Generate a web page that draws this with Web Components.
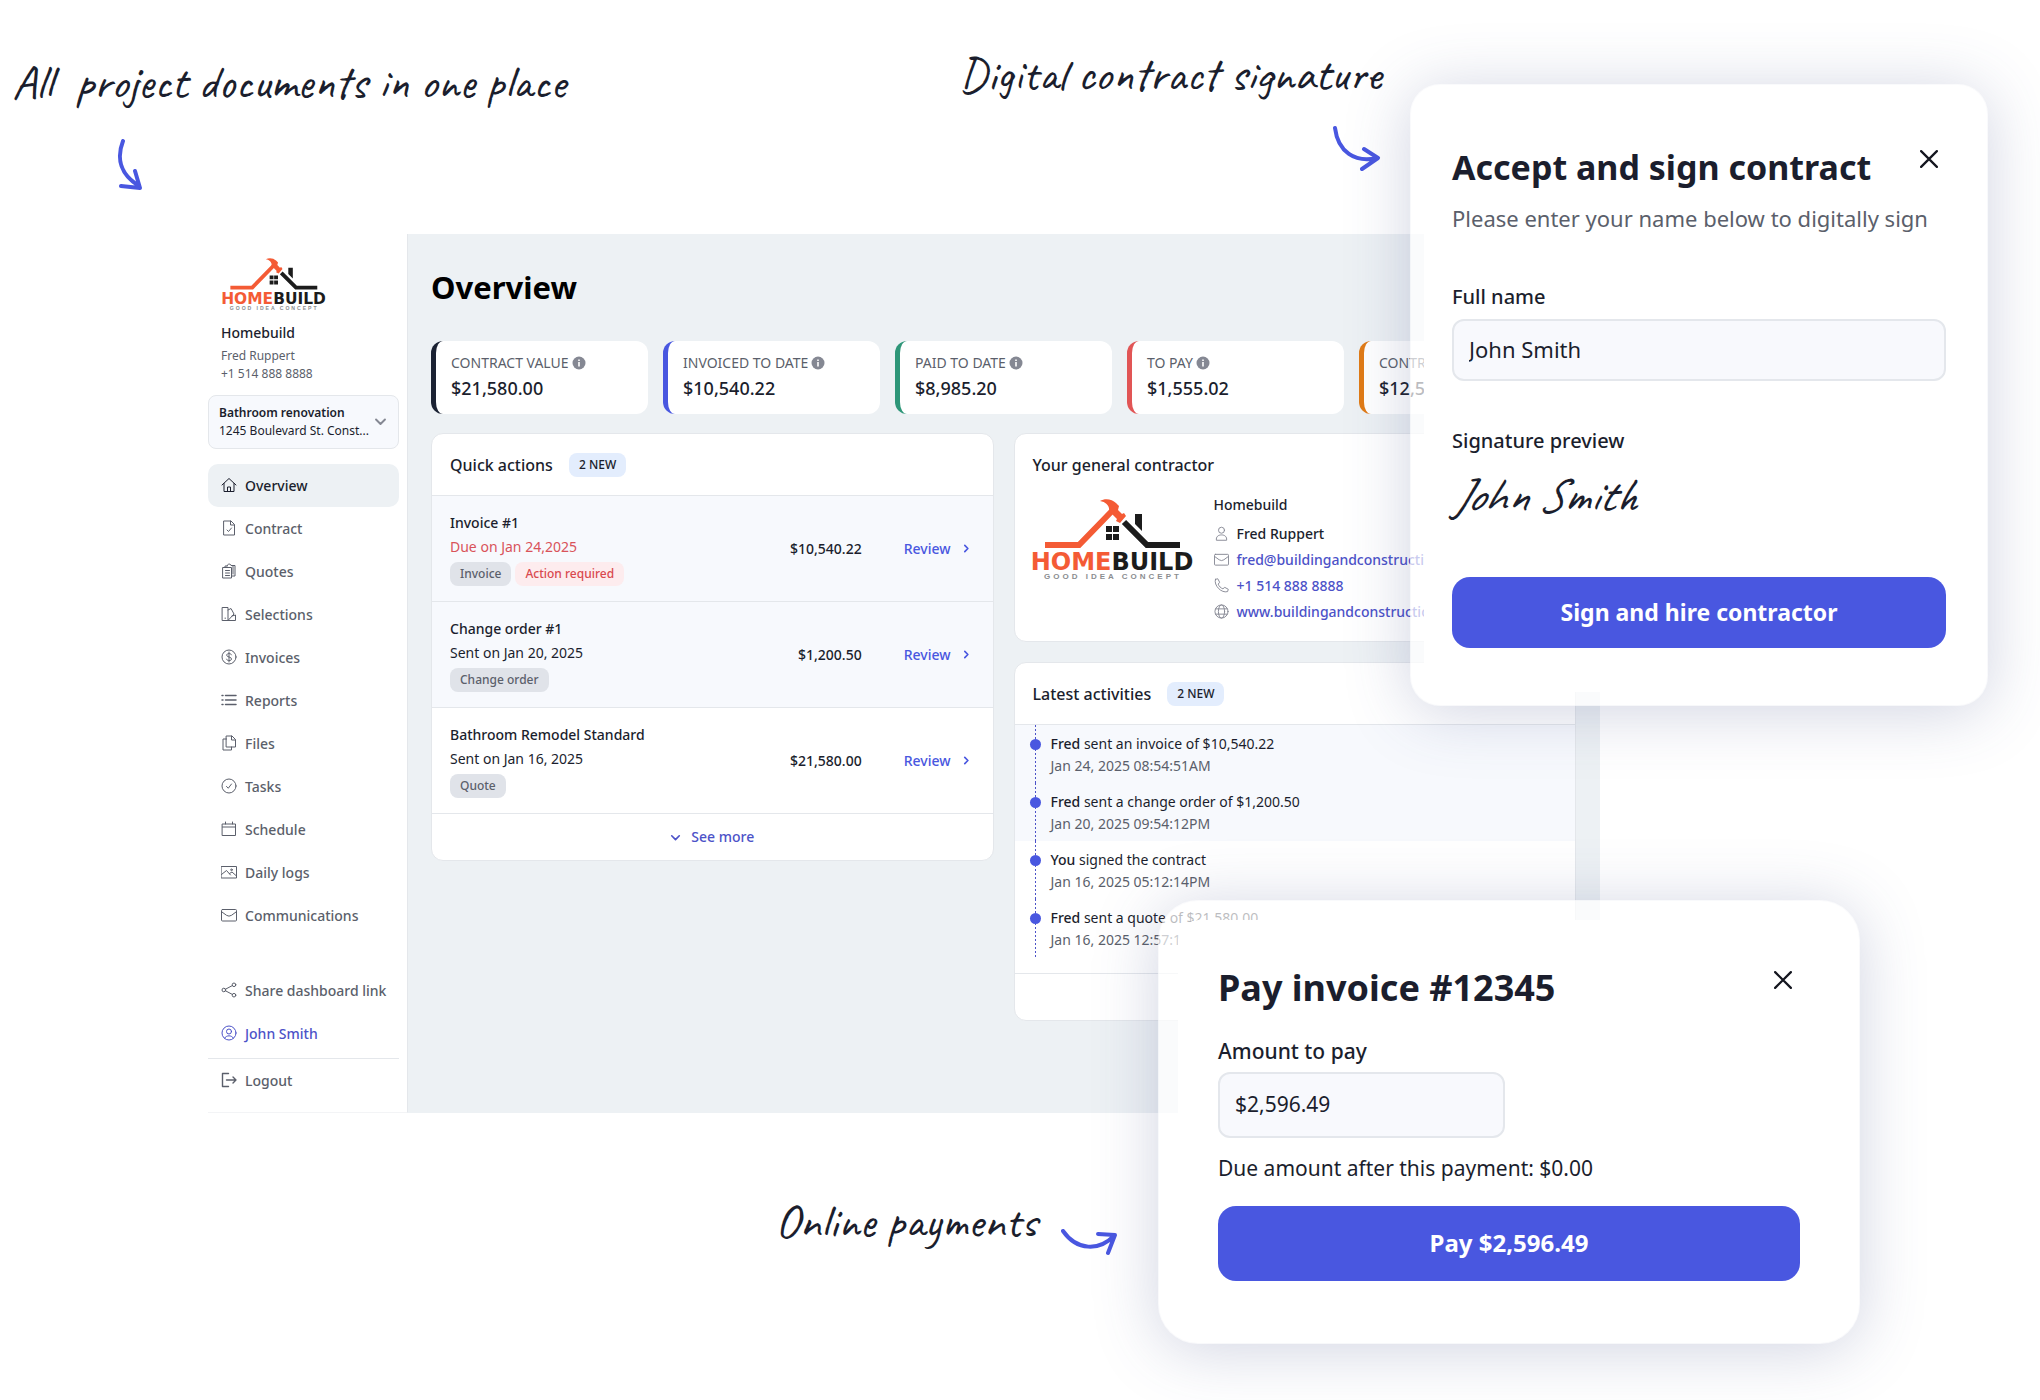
<!DOCTYPE html>
<html lang="en">
<head>
<meta charset="utf-8">
<title>Homebuild client dashboard</title>
<style>
  :root {
    --color-text: #1b1e2d;
    --color-text-secondary: #5b5f6b;
    --color-primary: #4957e0;
    --color-bg: #edf1f4;
    --color-tint: #f7f9fd;
    --color-border: #e4e7eb;
    --font-family: 'Noto Sans', 'Open Sans', sans-serif;
    --font-hand: Caveat, cursive;
  }

  body {
    margin: 0;
    background: #fff;
    color: var(--color-text);
    font-family: var(--font-family);
  }
</style>
</head>
<body>
<showcase-page></showcase-page>

<script>
/** Small base class: puts the markup returned by render() into an open shadow root. */
class BaseElement extends HTMLElement {
  constructor() {
    super();
    this.attachShadow({ mode: 'open' });
  }

  connectedCallback() {
    this.shadowRoot.innerHTML = this.render();
  }

  attr(name, fallback = '') {
    return this.getAttribute(name) ?? fallback;
  }
}

const ICONS = {
  home: '<path d="M1 8 8 1.5 15 8M3 6.500V14.500H13V6.500M6.500 14.500V10H9.500V14.500"/>',
  contract: '<path d="M3 1H10L13.500 4.500V15H3ZM9.500 1V5H13.500M6 10 7.500 11.500 10.500 8"/>',
  quotes: '<path d="M2 4.500H10.500V15H2ZM4 4.500V3H6M6 3C6 .5 10 .5 10 2.500H14V13H10.500M4.500 7.500H8.500M4.500 10H8.500M4.500 12.500H8.500M12 2.500V11"/>',
  selections: '<path d="M1.500 1.500H7V14.500H1.500ZM7 4 10 2.500 13 8 7 14.500M11 10 14.500 9V14.500H7M4.200 12V12.500"/>',
  invoices: '<circle cx="8" cy="8" r="7"/><path d="M10.500 5.800C10 4 5.700 4 5.700 6.200 5.700 8.500 10.500 7.500 10.500 10 10.500 12.200 6 12.200 5.500 10.200M8 3V13"/>',
  reports: '<path stroke-width="1.500" d="M4.500 3.500H15M4.500 8H15M4.500 12.500H15M1 3.500H2M1 8H2M1 12.500H2"/>',
  files: '<path d="M5.500 1H11L14.500 4.500V12H5.500ZM10.500 1V5H14.500M5.500 4H2V15H10.500V12"/>',
  tasks: '<circle cx="8" cy="8" r="7"/><path d="M5.500 8.500 7.300 10.200 10.500 6"/>',
  schedule: '<path d="M1.500 3H14.500V14.500H1.500ZM1.500 6H14.500M4.500 1V3M11.500 1V3"/>',
  logs: '<path d="M.5 2.500H15.500V14H.5ZM.5 10.500 5.500 6.500 9.500 11M8.500 9.500 11 8 15.500 12"/><circle cx="10.500" cy="5.800" r=".8"/>',
  mail: '<rect x=".5" y="2.500" width="15" height="11.500" rx="1"/><path d="M1 5 5.500 8.300Q8 10 10.500 8.300L15 5"/>',
  share: '<circle cx="2.800" cy="8" r="1.800"/><circle cx="13" cy="2.800" r="1.800"/><circle cx="13" cy="13.200" r="1.800"/><path d="M4.500 7.200 11.300 3.600M4.500 8.800 11.300 12.400"/>',
  account: '<circle cx="8" cy="8" r="7"/><circle cx="8" cy="6.500" r="2.500"/><path d="M3.800 13C5 10 11 10 12.200 13"/>',
  logout: '<path stroke-width="1.400" d="M7.500 1.500H1.500V14.500H7.500M5.500 8H15M12 5 15 8 12 11"/>',
  person: '<circle cx="8" cy="4.500" r="3.200"/><path d="M2.500 14.800C2 11.500 4.500 9.500 8 9.500S14 11.500 13.500 14.800Z"/>',
  phone: '<path d="M1.500 1.500 4 .8 6 4.500 4.500 6.500C5 8.500 7.500 11 9.500 11.500L11.500 10 15.200 12 14.500 14.500C8 16.500-.5 8 1.500 1.500Z"/>',
  globe: '<circle cx="8" cy="8" r="7"/><ellipse cx="8" cy="8" rx="3.300" ry="7"/><path d="M1.800 5.200H14.200M1.800 10.800H14.200"/>',
  right: '<path stroke-width="2.400" d="M5.500 3.500 10 8 5.500 12.500"/>',
  down: '<path stroke-width="2.400" d="M2.500 5.500 8 11 13.500 5.500"/>',
  close: '<path stroke-width="2" d="M1 1 15 15M15 1 1 15"/>',
};

/** <ui-icon name="home"> - 16 unit line icon, sized with --icon-size */
class UiIcon extends BaseElement {
  render() {
    return `
      <style>
        :host { display: inline-flex; flex: none; width: var(--icon-size, 16px); height: var(--icon-size, 16px); }
        svg { width: 100%; height: 100%; fill: none; stroke: currentColor; stroke-width: 1; stroke-linejoin: round; stroke-linecap: round; }
      </style>
      <svg viewBox="0 0 16 16" aria-hidden="true">${ICONS[this.attr('name')] || ''}</svg>
    `;
  }
}

/** <brand-logo> - roof and hammer mark with the company name */
class BrandLogo extends BaseElement {
  render() {
    return `
      <style>
        :host { display: block; flex: none; }
        svg { display: block; width: 100%; overflow: visible; }
        .name { font: 700 24px 'DejaVu Sans', sans-serif; }
        .tagline { font: 700 8px 'Liberation Sans', sans-serif; letter-spacing: 3px; fill: #8b8d90; }
      </style>
      <svg viewBox="0 0 160 80" role="img" aria-label="Homebuild">
        <g fill="none" stroke-width="6">
          <path stroke="#f45b35" d="M13 46H47L80 12"/>
          <path stroke="#1c1c1c" d="M92 23 115 46H148"/>
        </g>
        <path fill="#f45b35" d="M68 2C73-1 80 0 84 4L87 7 86 11 90 15 92 14 94 17 88 24 84 22 85 20 80 15 77 12C78 7 74 3 68 2Z"/>
        <path fill="#1c1c1c" d="M103 15H110V32L103 25ZM74 27H80V33H74ZM81 27H87V33H81ZM74 35H80V41H74ZM81 35H87V41H81Z"/>
        <text class="name" x="80" y="71" text-anchor="middle"><tspan fill="#f45b35">HOME</tspan><tspan fill="#1c1c1c">BUILD</tspan></text>
        <text class="tagline" x="81" y="80" text-anchor="middle">GOOD IDEA CONCEPT</text>
      </svg>
    `;
  }
}

/** <hand-note arrow="down|right|up"> - handwritten caption with a blue arrow */
class HandNote extends BaseElement {
  render() {
    const arrows = {
      down: '<svg width="28" height="52" viewBox="0 0 28 52"><path d="M7 2C0 20 5 36 23 47M5 47 24 49 19 32"/></svg>',
      right: '<svg width="48" height="46" viewBox="0 0 48 46"><path d="M2 2C5 26 22 37 44 32M31 23 45 32 29 43"/></svg>',
      up: '<svg width="58" height="28" viewBox="0 0 58 28"><path d="M2 2C16 22 38 22 53 7M37 5 54 6 47 24"/></svg>',
    };
    const kind = this.attr('arrow', 'down');
    return `
      <style>
        :host { display: inline-flex; flex-direction: column; font: 400 48px/48px var(--font-hand); white-space: pre; }
        :host([arrow="up"]) { flex-direction: row; gap: 24px; align-items: flex-start; }
        svg { fill: none; stroke: var(--color-primary); stroke-width: 4; stroke-linecap: round; stroke-linejoin: round; }
        .arrow { display: flex; }
        .down { margin: 33px 0 0 104px; }
        .right { margin: 28px 0 0; align-self: flex-end; }
        .up { padding-top: 32px; }
      </style>
      <slot></slot><span class="arrow ${kind}">${arrows[kind]}</span>
    `;
  }
}

/** <nav-item icon="home" [current]> */
class NavItem extends BaseElement {
  render() {
    return `
      <style>
        :host { display: block; }
        a {
          display: flex; align-items: center; gap: 8px; height: 43px; padding: 0 13px; border-radius: 10px;
          color: var(--color-text-secondary); font-size: 14px; font-weight: 500; text-decoration: none; white-space: nowrap;
        }
        :host([current]) a { background: var(--color-bg); color: var(--color-text); }
        :host([accent]) a { color: #4c52c8; }
      </style>
      <a href="#${this.attr('icon')}"><ui-icon name="${this.attr('icon')}"></ui-icon><slot></slot></a>
    `;
  }
}

class AppSidebar extends BaseElement {
  render() {
    return `
      <style>
        :host {
          display: flex; flex-direction: column; box-sizing: border-box; width: 200px; flex: none;
          padding: 24px 8px 10px 0; border-right: 1px solid var(--color-border); border-bottom: 1px solid #f3f4f6;
        }
        brand-logo { width: 103px; margin-left: 14px; }
        .company { padding: 11px 13px 0; }
        h2 { margin: 0; font-size: 14px; line-height: 24px; font-weight: 500; }
        .company p { margin: 0; font-size: 12px; line-height: 18px; color: var(--color-text-secondary); }
        h2 + p { padding-top: 2px; }
        .project {
          display: flex; align-items: center; justify-content: space-between; gap: 4px;
          margin: 12px 0 15px; padding: 8px 11px 8px 10px; border: 1px solid var(--color-border); border-radius: 8px;
          background: var(--color-tint); color: inherit; font: 400 12px/18px var(--font-family); text-align: left;
          white-space: nowrap; --icon-size: 13px;
        }
        .project small { display: block; font-size: 12px; }
        .project b { font-weight: 600; }
        .project ui-icon { color: #858893; }
        .account { margin-top: 32px; }
        hr { width: 100%; margin: 3px 0 0; border: 0; border-top: 1px solid var(--color-border); }
      </style>
      <brand-logo></brand-logo>
      <div class="company">
        <h2>Homebuild</h2>
        <p>Fred Ruppert</p>
        <p>+1 514 888 8888</p>
      </div>
      <button class="project" type="button" aria-haspopup="listbox">
        <span><b>Bathroom renovation</b><small>1245 Boulevard St. Const...</small></span>
        <ui-icon name="down"></ui-icon>
      </button>
      <nav>
        <nav-item icon="home" current>Overview</nav-item>
        <nav-item icon="contract">Contract</nav-item>
        <nav-item icon="quotes">Quotes</nav-item>
        <nav-item icon="selections">Selections</nav-item>
        <nav-item icon="invoices">Invoices</nav-item>
        <nav-item icon="reports">Reports</nav-item>
        <nav-item icon="files">Files</nav-item>
        <nav-item icon="tasks">Tasks</nav-item>
        <nav-item icon="schedule">Schedule</nav-item>
        <nav-item icon="logs">Daily logs</nav-item>
        <nav-item icon="mail">Communications</nav-item>
      </nav>
      <div class="account">
        <nav-item icon="share">Share dashboard link</nav-item>
        <nav-item icon="account" accent>John Smith</nav-item>
        <hr>
        <nav-item icon="logout">Logout</nav-item>
      </div>
    `;
  }
}

/** <stat-card label="TO PAY" color="#e15555">$1,555.02</stat-card> */
class StatCard extends BaseElement {
  render() {
    return `
      <style>
        :host {
          display: block; box-sizing: border-box; min-width: 0; padding: 10px 0 13px 15px; overflow: hidden; white-space: nowrap;
          background: #fff; border-left: 5px solid ${this.attr('color')}; border-radius: 12px;
        }
        .label { display: flex; align-items: center; gap: 3px; font-size: 14px; line-height: 24px; color: var(--color-text-secondary); }
        .value { font-size: 18px; line-height: 26px; font-weight: 500; }
        svg { flex: none; }
      </style>
      <div class="label">${this.attr('label')}
        <svg width="14" height="14" viewBox="0 0 14 14" aria-hidden="true"><circle cx="7" cy="7" r="6.500" fill="#858893"/><path stroke="#fff" stroke-width="1.600" d="M7 6V10.500M7 3.500V5"/></svg>
      </div>
      <div class="value"><slot></slot></div>
    `;
  }
}

/** <ui-badge tone="new|danger"> */
class UiBadge extends BaseElement {
  render() {
    return `
      <style>
        :host {
          display: inline-block; padding: 0 10px; border-radius: 8px; background: #e0e3e9; color: #5b606b;
          font-size: 12px; line-height: 24px; font-weight: 500; white-space: nowrap;
        }
        :host([tone="new"]) { background: #e3edfd; color: var(--color-text); }
        :host([tone="danger"]) { background: #fdecee; color: #d9494f; }
      </style>
      <slot></slot>
    `;
  }
}

/** <ui-panel heading="..." [badge="2 NEW"] [divided]> with an optional footer slot */
class UiPanel extends BaseElement {
  render() {
    const badge = this.attr('badge');
    return `
      <style>
        :host { display: block; overflow: hidden; background: #fff; border: 1px solid var(--color-border); border-radius: 12px; }
        header { display: flex; align-items: center; gap: 16px; padding: 0 18px; height: 61px; }
        h2 { margin: 0; font-size: 16px; line-height: 24px; font-weight: 500; }
        :host([divided]) header { border-bottom: 1px solid var(--color-border); }
      </style>
      <header><h2>${this.attr('heading')}</h2>${badge ? `<ui-badge tone="new">${badge}</ui-badge>` : ''}</header>
      <slot></slot>
      <slot name="footer"></slot>
    `;
  }
}

/** <action-row heading amount note [overdue] [fresh]> with badges in the default slot */
class ActionRow extends BaseElement {
  render() {
    return `
      <style>
        :host {
          display: flex; align-items: center; padding: 15px 21px 15px 18px; font-size: 14px; line-height: 24px;
          border-bottom: 1px solid var(--color-border);
        }
        :host([fresh]) { background: var(--color-tint); }
        .info { flex: 1; }
        h3, p { margin: 0; font-size: 14px; font-weight: 500; }
        p { font-weight: 400; }
        :host([overdue]) p { color: #d9535a; }
        .badges { display: flex; gap: 4px; padding-top: 3px; }
        .amount { font-weight: 500; }
        a { display: flex; align-items: center; gap: 10px; margin-left: 42px; color: var(--color-primary); font-weight: 500; text-decoration: none; --icon-size: 11px; }
      </style>
      <div class="info">
        <h3>${this.attr('heading')}</h3>
        <p>${this.attr('note')}</p>
        <div class="badges"><slot></slot></div>
      </div>
      <span class="amount">${this.attr('amount')}</span>
      <a href="#review">Review <ui-icon name="right"></ui-icon></a>
    `;
  }
}

/** <contact-line icon="mail" [href]> */
class ContactLine extends BaseElement {
  render() {
    const href = this.attr('href');
    return `
      <style>
        :host { display: flex; align-items: center; gap: 8px; height: 26px; font-size: 14px; font-weight: 500; white-space: nowrap; --icon-size: 15px; }
        ui-icon { color: #858893; }
        a { color: #4c52c8; text-decoration: none; }
      </style>
      <ui-icon name="${this.attr('icon')}"></ui-icon>${href ? `<a href="${href}"><slot></slot></a>` : '<slot></slot>'}
    `;
  }
}

/** <activity-item who="Fred" when="..." [fresh]> */
class ActivityItem extends BaseElement {
  render() {
    return `
      <style>
        :host { display: flex; gap: 10px; padding-left: 15px; font-size: 14px; line-height: 22px; }
        :host([fresh]) { background: var(--color-tint); }
        .rail {
          display: flex; justify-content: center; width: 11px;
          background: repeating-linear-gradient(#4c52c8 0 2px, transparent 2px 4px) center / 1px 100% no-repeat;
        }
        .dot { width: 11px; height: 11px; margin-top: 14px; border-radius: 50%; background: var(--color-primary); }
        .body { padding: 8px 0 6px; }
        b { font-weight: 500; }
        time { display: block; color: var(--color-text-secondary); }
      </style>
      <div class="rail"><span class="dot"></span></div>
      <div class="body"><b>${this.attr('who')}</b> <slot></slot><time>${this.attr('when')}</time></div>
    `;
  }
}

class OverviewScreen extends BaseElement {
  render() {
    return `
      <style>
        :host { display: block; flex: 1; min-width: 0; padding: 0 24px 90px 23px; background: var(--color-bg); }
        h1 { margin: 0; padding: 29px 0 30px; color: #000; font-size: 31px; line-height: 48px; font-weight: 700; }
        .stats { display: grid; grid-template-columns: repeat(5, 1fr); gap: 15px; }
        .columns { display: grid; grid-template-columns: 1fr 1fr; gap: 20px; align-items: start; padding-top: 19px; }
        .column { display: grid; gap: 20px; min-width: 0; }
        .more {
          display: flex; align-items: center; justify-content: center; gap: 10px; width: 100%; height: 46px; padding: 0;
          border: 0; background: none; color: #4c52c8; font: 500 14px/24px var(--font-family); --icon-size: 11px;
        }
        .contractor { display: flex; gap: 22px; padding: 0 17px; }
        .contractor brand-logo { width: 160px; padding-top: 4px; }
        .contractor div { padding-bottom: 17px; }
        h3 { margin: 0 0 5px; font-size: 14px; line-height: 20px; font-weight: 500; }
        .activities { padding-bottom: 16px; border-bottom: 1px solid var(--color-border); }
        .foot { height: 46px; }
      </style>
      <h1>Overview</h1>
      <div class="stats">
        <stat-card label="CONTRACT VALUE" color="#1b2233">$21,580.00</stat-card>
        <stat-card label="INVOICED TO DATE" color="#4957e0">$10,540.22</stat-card>
        <stat-card label="PAID TO DATE" color="#2e9678">$8,985.20</stat-card>
        <stat-card label="TO PAY" color="#e15555">$1,555.02</stat-card>
        <stat-card label="CONTRACT" color="#e07a16">$12,500.00</stat-card>
      </div>
      <div class="columns">
        <ui-panel heading="Quick actions" badge="2 NEW" divided>
          <action-row heading="Invoice #1" note="Due on Jan 24,2025" amount="$10,540.22" overdue fresh>
            <ui-badge>Invoice</ui-badge><ui-badge tone="danger">Action required</ui-badge>
          </action-row>
          <action-row heading="Change order #1" note="Sent on Jan 20, 2025" amount="$1,200.50" fresh>
            <ui-badge>Change order</ui-badge>
          </action-row>
          <action-row heading="Bathroom Remodel Standard" note="Sent on Jan 16, 2025" amount="$21,580.00">
            <ui-badge>Quote</ui-badge>
          </action-row>
          <button class="more" type="button" slot="footer"><ui-icon name="down"></ui-icon>See more</button>
        </ui-panel>
        <div class="column">
          <ui-panel heading="Your general contractor">
            <div class="contractor">
              <brand-logo></brand-logo>
              <div>
                <h3>Homebuild</h3>
                <contact-line icon="person">Fred Ruppert</contact-line>
                <contact-line icon="mail" href="#mail">fred@buildingandconstruction.com</contact-line>
                <contact-line icon="phone" href="#phone">+1 514 888 8888</contact-line>
                <contact-line icon="globe" href="#website">www.buildingandconstruction.com</contact-line>
              </div>
            </div>
          </ui-panel>
          <ui-panel heading="Latest activities" badge="2 NEW" divided>
            <div class="activities">
              <activity-item who="Fred" when="Jan 24, 2025 08:54:51AM" fresh>sent an invoice of $10,540.22</activity-item>
              <activity-item who="Fred" when="Jan 20, 2025 09:54:12PM" fresh>sent a change order of $1,200.50</activity-item>
              <activity-item who="You" when="Jan 16, 2025 05:12:14PM">signed the contract</activity-item>
              <activity-item who="Fred" when="Jan 16, 2025 12:57:14PM">sent a quote of $21,580.00</activity-item>
            </div>
            <div class="foot" slot="footer"></div>
          </ui-panel>
        </div>
      </div>
    `;
  }
}

/** <modal-card heading="..."> - floating card, its rim lets the page shine through a little */
class ModalCard extends BaseElement {
  render() {
    return `
      <style>
        :host {
          display: block; box-sizing: border-box; background: #fff padding-box;
          border: var(--rim) solid rgba(255, 255, 255, 0.7); border-radius: var(--radius);
          box-shadow: 0 6px 64px rgba(70, 85, 140, 0.25);
        }
        header { display: flex; justify-content: space-between; align-items: flex-start; }
        h2 { margin: 0; font-size: var(--heading-size); line-height: 48px; font-weight: 700; white-space: nowrap; }
        button { display: flex; margin: 7px 8px 0 0; padding: 0; border: 0; background: none; color: #14161f; --icon-size: 18px; }
      </style>
      <header>
        <h2>${this.attr('heading')}</h2>
        <button type="button" aria-label="Close"><ui-icon name="close"></ui-icon></button>
      </header>
      <slot></slot>
    `;
  }
}

const FORM_STYLES = `
  label, .label { display: block; font-weight: 500; }
  input {
    display: block; box-sizing: border-box; width: 100%; padding: 0 16px 3px 15px; border: 2px solid #e4e7ec; border-radius: 12px;
    background: #f8f9fd; color: var(--color-text); font-family: var(--font-family); font-size: 22px;
  }
  p { margin: 0; }
  .submit {
    display: block; width: 100%; padding: 0 0 2px; border: 0; border-radius: 18px; background: var(--color-primary);
    color: #fff; font-family: var(--font-family); font-size: 24px; font-weight: 700;
  }
`;

class SignContract extends BaseElement {
  render() {
    return `
      <style>
        ${FORM_STYLES}
        :host { display: block; }
        modal-card { --rim: 14px; --radius: 30px; --heading-size: 34px; padding: 45px 28px 44px; }
        .lead { padding-top: 9px; color: var(--color-text-secondary); font-size: 22px; line-height: 36px; white-space: nowrap; }
        label, .label { font-size: 20px; line-height: 28px; }
        label { padding: 47px 0 8px; }
        input { height: 62px; }
        .label { padding-top: 46px; }
        .signature { padding: 10px 0 52px; font: italic 400 48px/60px var(--font-hand); }
        .submit { height: 71px; font-size: 23px; }
      </style>
      <modal-card heading="Accept and sign contract">
        <p class="lead">Please enter your name below to digitally sign</p>
        <label for="name">Full name</label>
        <input id="name" type="text" value="John Smith">
        <p class="label">Signature preview</p>
        <p class="signature">John Smith</p>
        <button class="submit" type="button">Sign and hire contractor</button>
      </modal-card>
    `;
  }
}

class PayInvoice extends BaseElement {
  render() {
    return `
      <style>
        ${FORM_STYLES}
        :host { display: block; }
        modal-card { --rim: 20px; --radius: 40px; --heading-size: 36px; padding: 44px 40px 43px; }
        label, .due, input { font-size: 21px; line-height: 32px; }
        label { padding: 23px 0 5px; }
        input { width: 287px; height: 66px; }
        .due { padding: 14px 0 22px; }
        .submit { height: 75px; }
      </style>
      <modal-card heading="Pay invoice #12345">
        <label for="amount">Amount to pay</label>
        <input id="amount" type="text" value="$2,596.49">
        <p class="due">Due amount after this payment: $0.00</p>
        <button class="submit" type="button">Pay $2,596.49</button>
      </modal-card>
    `;
  }
}

class ShowcasePage extends BaseElement {
  render() {
    return `
      <style>
        :host { display: block; position: relative; overflow: hidden; min-height: 100vh; }
        .notes { display: grid; grid-template-columns: 47% 1fr; align-items: start; padding-top: 50px; height: 184px; }
        .notes hand-note { justify-self: start; margin-top: 8px; margin-left: 12px; }
        .notes hand-note + hand-note { margin: 0; }
        .app { display: flex; margin: 0 440px 0 208px; }
        .payments { margin: 84px 0 0 38%; }
        sign-contract, pay-invoice { position: absolute; }
        sign-contract { top: 84px; right: 52px; width: 578px; }
        pay-invoice { top: 900px; right: 180px; width: 702px; }
      </style>
      <div class="notes">
        <hand-note arrow="down">All  project documents in one place</hand-note>
        <hand-note arrow="right">Digital contract signature</hand-note>
      </div>
      <div class="app">
        <app-sidebar></app-sidebar>
        <overview-screen></overview-screen>
      </div>
      <div class="payments"><hand-note arrow="up">Online payments</hand-note></div>
      <sign-contract></sign-contract>
      <pay-invoice></pay-invoice>
    `;
  }
}

customElements.define('ui-icon', UiIcon);
customElements.define('brand-logo', BrandLogo);
customElements.define('hand-note', HandNote);
customElements.define('nav-item', NavItem);
customElements.define('app-sidebar', AppSidebar);
customElements.define('stat-card', StatCard);
customElements.define('ui-badge', UiBadge);
customElements.define('ui-panel', UiPanel);
customElements.define('action-row', ActionRow);
customElements.define('contact-line', ContactLine);
customElements.define('activity-item', ActivityItem);
customElements.define('overview-screen', OverviewScreen);
customElements.define('modal-card', ModalCard);
customElements.define('sign-contract', SignContract);
customElements.define('pay-invoice', PayInvoice);
customElements.define('showcase-page', ShowcasePage);
</script>
</body>
</html>
